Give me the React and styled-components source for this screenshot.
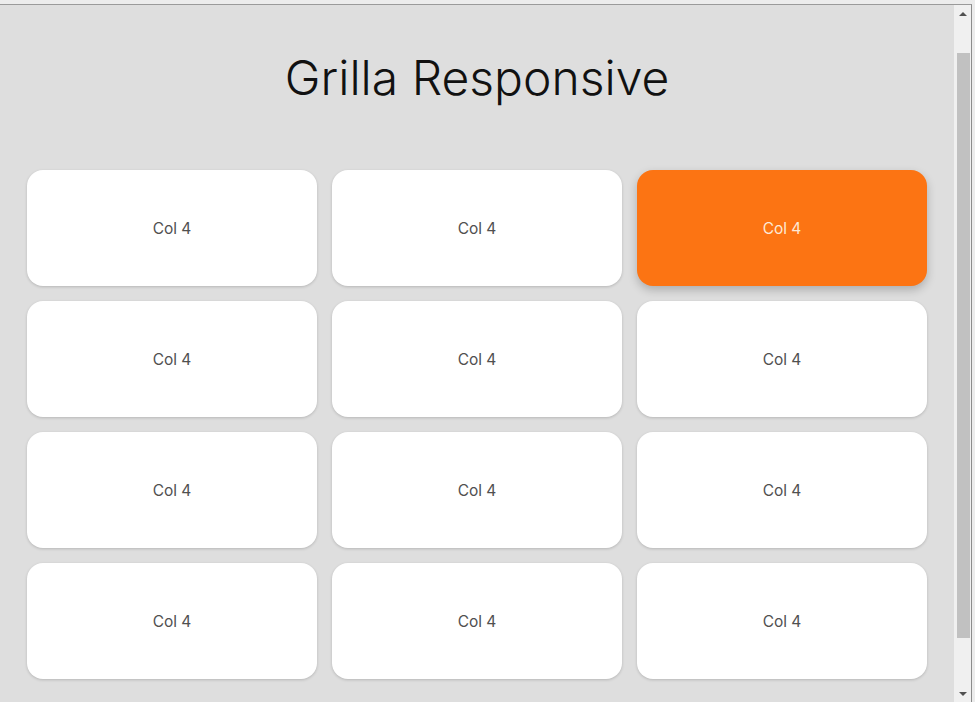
import React from 'react';
import styled, { createGlobalStyle } from 'styled-components';

const GlobalStyle = createGlobalStyle`
    html, body {
        margin: 0;
        padding: 0;
        height: 100%;
        overflow: hidden;
    }
    body {
        font-family: Inter, "Noto Sans", sans-serif;
        background: #ececec;
    }
`

const cells = Array.from({ length: 12 }, (_, i) => ({ id: i, label: 'Col 4', active: i === 2 }));

const App = () => {
    return (
        <>
            <GlobalStyle />
            <Frame>
                <Viewport>
                    <Wrapper>
                        <Title>Grilla Responsive</Title>
                        <Grid>
                            {cells.map(cell => (
                                <Card key={cell.id} active={cell.active}>
                                    {cell.label}
                                </Card>
                            ))}
                        </Grid>
                    </Wrapper>
                </Viewport>
                <ScrollBar>
                    <ArrowButton><Arrow dir="up" /></ArrowButton>
                    <Track>
                        <Thumb />
                    </Track>
                    <ArrowButton><Arrow dir="down" /></ArrowButton>
                </ScrollBar>
            </Frame>
        </>
    )
}

const Frame = styled.div`
    box-sizing: border-box;
    height: 702px;
    padding: 4px 3px 0 0;
    background: #ececec;
    display: flex;
`

const Viewport = styled.div`
    flex: 1;
    min-width: 0;
    overflow: hidden;
    background: #dedede;
    border-top: 1px solid #9a9a9a;
`

const ScrollBar = styled.div`
    width: 17px;
    display: flex;
    flex-direction: column;
    background: #f0f0f0;
    border-top: 1px solid #9a9a9a;
    border-right: 1px solid #8c8c8c;
`

const ArrowButton = styled.div`
    height: 17px;
    display: flex;
    align-items: center;
    justify-content: center;
`

const Arrow = styled.span`
    width: 0;
    height: 0;
    border-left: 4px solid transparent;
    border-right: 4px solid transparent;
    ${({ dir }) => dir === "up" ?
        "border-bottom: 4px solid #505050;"
        :
        "border-top: 4px solid #505050;"}
`

const Track = styled.div`
    flex: 1;
    padding-top: 31px;
`

const Thumb = styled.div`
    height: 585px;
    margin: 0 1px 0 3px;
    background: #c1c1c1;
`

const Wrapper = styled.div`
    max-width: 900px;
    margin: 0 auto;
    padding: 43px 0 0;
`

const Title = styled.h1`
    margin: 0 0 62px;
    font-family: Inter, "Noto Sans", sans-serif;
    font-weight: 300;
    font-size: 48px;
    line-height: 60px;
    color: #111;
    text-align: center;
`

const Grid = styled.div`
    display: grid;
    grid-template-columns: repeat(3, 1fr);
    grid-auto-rows: 116px;
    gap: 15px;
`

const Card = styled.div`
    display: flex;
    align-items: center;
    justify-content: center;
    border-radius: 16px;
    font-family: Inter, "Noto Sans", sans-serif;
    font-size: 15.5px;
    cursor: pointer;
    ${({ active }) => active ?
        `background: #fc7413;
         color: #fde9d6;
         box-shadow: 0 4px 10px rgba(0, 0, 0, 0.22);`
        :
        `background: #ffffff;
         color: #505050;
         box-shadow: 0 1px 3px rgba(0, 0, 0, 0.18);`}
`

export default App
